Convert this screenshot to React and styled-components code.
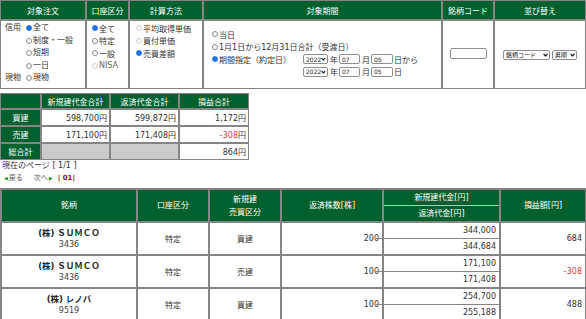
import React from 'react';
import styled, { createGlobalStyle, css } from 'styled-components';

const GREEN = '#00612e';
const LINE = '#858585';

const GlobalStyle = createGlobalStyle`
  body {
    margin: 0;
    background: #fff;
    font-family: "DejaVu Sans", "Noto Sans CJK JP", sans-serif;
    font-size: 8px;
    color: #333;
  }
`;

const Page = styled.div`
  width: 586px;
  display: flex;
  flex-direction: column;
  align-items: flex-start;
`;

/* ---- search form ---- */

const SearchTable = styled.table`
  width: 586px;
  border-collapse: separate;
  border-spacing: 0;
  table-layout: fixed;
`;

const Col = styled.col`
  width: ${(p) => p.$w}px;
`;

const HeadCell = styled.th`
  background: ${GREEN};
  color: #fff;
  font-weight: normal;
  height: 18px;
  padding: 0;
  border: 1px solid ${LINE};
  text-align: center;
  white-space: nowrap;
`;

const FormCell = styled.td`
  height: 66px;
  padding: ${(p) => (p.$top ? `1px 0 0 ${p.$pad}px` : `0 0 0 ${p.$pad || 0}px`)};
  border: 1px solid ${LINE};
  vertical-align: ${(p) => (p.$top ? 'top' : 'middle')};
  text-align: ${(p) => (p.$center ? 'center' : 'left')};
  white-space: nowrap;
`;

const OrderGrid = styled.div`
  display: grid;
  grid-template-columns: 21px auto;
  line-height: 12.5px;
`;

const Option = styled.div`
  display: flex;
  align-items: center;
  height: 12.5px;
  color: ${(p) => (p.$dim ? '#666' : '#333')};
`;

const Radio = styled.span`
  display: inline-block;
  box-sizing: border-box;
  width: 6px;
  height: 6px;
  margin-right: 1px;
  border-radius: 50%;
  border: 1px solid ${(p) => (p.$checked ? '#2b7de9' : p.$disabled ? '#d0d0d0' : '#8c8c8c')};
  background: ${(p) => (p.$checked ? '#1f6fe0' : '#fff')};
`;

const PeriodGrid = styled.div`
  display: grid;
  grid-template-columns: 91px auto;
  grid-auto-rows: 12.5px;
  align-items: center;
  padding-bottom: 3px;
`;

const Wide = styled.div`
  grid-column: 1 / span 2;
`;

const DateRow = styled.div`
  grid-column: 2;
  display: flex;
  align-items: center;
`;

const Select = styled.span`
  display: inline-flex;
  align-items: center;
  justify-content: space-between;
  box-sizing: border-box;
  width: ${(p) => p.$w}px;
  height: 10px;
  padding: 0 1px 0 2px;
  border: 1px solid #8f8f8f;
  border-radius: 2px;
  background: #fff;
  font-size: 6px;
  color: #222;
`;

const TextBox = styled.span`
  display: inline-flex;
  align-items: center;
  box-sizing: border-box;
  width: ${(p) => p.$w}px;
  height: ${(p) => p.$h || 10}px;
  padding-left: 2px;
  border: 1px solid #8f8f8f;
  border-radius: 2px;
  background: #fff;
  font-size: 6px;
  color: #222;
`;

const Unit = styled.span`
  margin: 0 1px 0 2px;
`;

const SortBox = styled.div`
  display: flex;
  justify-content: center;
  gap: 2px;
`;

const Chevron = () => (
  <svg width="5" height="4" viewBox="0 0 5 4">
    <path d="M0.6 1 L2.5 3 L4.4 1" fill="none" stroke="#111" strokeWidth="1.2" />
  </svg>
);

/* ---- totals ---- */

const SumTable = styled.table`
  margin-top: 4px;
  width: 249px;
  border-collapse: separate;
  border-spacing: 0;
  table-layout: fixed;
`;

const SumHead = styled.th`
  background: ${GREEN};
  color: #fff;
  font-weight: normal;
  height: 14px;
  padding: 0;
  border: 1px solid ${LINE};
  text-align: center;
`;

const SumCell = styled.td`
  height: 15px;
  padding: 0 2px 0 0;
  border: 1px solid ${LINE};
  text-align: right;
  background: ${(p) => (p.$blank ? '#cbcbcb' : '#fff')};
  color: ${(p) => (p.$neg ? '#e5383b' : '#333')};
`;

const Yen = styled.span`
  color: #333;
`;

/* ---- pager ---- */

const PageInfo = styled.div`
  margin-left: 2px;
  line-height: 12px;
  color: #333;
`;

const Pager = styled.div`
  display: flex;
  align-items: center;
  margin-left: 3px;
  line-height: 12px;
  font-size: 7px;
  color: #555;
`;

const Arrow = styled.span`
  color: #1f8a2a;
  font-size: 5px;
  margin: 0 1px;
`;

const PageLink = styled.span`
  margin-left: ${(p) => p.$gap || 0}px;
`;

const PageNo = styled.span`
  margin-left: 4px;
  color: #8b1a1a;
  font-weight: bold;
`;

/* ---- result list ---- */

const ListTable = styled.table`
  margin-top: 4px;
  width: 585px;
  border-collapse: collapse;
  table-layout: fixed;
`;

const ListHead = styled.th`
  background: ${GREEN};
  color: #fff;
  font-weight: normal;
  height: 15px;
  padding: 0;
  line-height: 13px;
  border: 2px solid ${LINE};
  border-top-width: ${(p) => (p.$split === 'bottom' ? 1 : 2)}px;
  border-bottom-width: ${(p) => (p.$split === 'top' ? 1 : 2)}px;
  border-top-color: ${(p) => (p.$split === 'bottom' ? '#bfbfbf' : LINE)};
  border-bottom-color: ${(p) => (p.$split === 'top' ? '#bfbfbf' : LINE)};
  text-align: center;
`;

const ListCell = styled.td`
  height: 15px;
  padding: 0 ${(p) => (p.$right ? 3 : 0)}px 0 0;
  border: 2px solid ${LINE};
  border-top-width: ${(p) => (p.$split === 'bottom' ? 1 : 2)}px;
  border-bottom-width: ${(p) => (p.$split === 'top' ? 1 : 2)}px;
  text-align: ${(p) => (p.$right ? 'right' : 'center')};
  color: ${(p) => (p.$neg ? '#e5383b' : '#333')};
  background: #fff;
  ${(p) =>
    p.$split === 'top' &&
    css`
      position: relative;
      &::after {
        content: '';
        position: absolute;
        left: -8px;
        bottom: -1px;
        width: 8px;
        height: 1px;
        background: ${LINE};
      }
    `}
`;

const Name = styled.div`
  font-weight: bold;
  font-size: 8.5px;
  color: #222;
  line-height: 12px;
`;

const Code = styled.div`
  color: #444;
  line-height: 12px;
`;

const summary = [
  { label: '買建', open: '598,700', close: '599,872', pl: '1,172' },
  { label: '売建', open: '171,100', close: '171,408', pl: '-308' },
];

const positions = [
  { name: '(株) ＳＵＭＣＯ', code: '3436', side: '買建', qty: 200, open: '344,000', close: '344,684', pl: '684' },
  { name: '(株) ＳＵＭＣＯ', code: '3436', side: '売建', qty: 100, open: '171,100', close: '171,408', pl: '-308' },
  { name: '(株) レノバ', code: '9519', side: '買建', qty: 100, open: '254,700', close: '255,188', pl: '488' },
];

const DateInputs = ({ tail }) => (
  <DateRow>
    <Select $w={25}>2022<Chevron /></Select>
    <Unit>年</Unit>
    <TextBox $w={21}>07</TextBox>
    <Unit>月</Unit>
    <TextBox $w={22}>05</TextBox>
    <Unit style={{ marginLeft: 1 }}>{tail}</Unit>
  </DateRow>
);

const App = () => {
  return (
    <Page>
      <GlobalStyle />
      <SearchTable>
        <colgroup>
          <Col $w={86} />
          <Col $w={43} />
          <Col $w={74} />
          <Col $w={239} />
          <Col $w={52} />
          <Col $w={92} />
        </colgroup>
        <thead>
          <tr>
            <HeadCell>対象注文</HeadCell>
            <HeadCell>口座区分</HeadCell>
            <HeadCell>計算方法</HeadCell>
            <HeadCell>対象期間</HeadCell>
            <HeadCell>銘柄コード</HeadCell>
            <HeadCell>並び替え</HeadCell>
          </tr>
        </thead>
        <tbody>
          <tr>
            <FormCell $top $pad={4}>
              <OrderGrid>
                <span>信用</span>
                <Option><Radio $checked />全て</Option>
                <span />
                <Option><Radio />制度・一般</Option>
                <span />
                <Option><Radio />短期</Option>
                <span />
                <Option><Radio />一日</Option>
                <span>現物</span>
                <Option><Radio />現物</Option>
              </OrderGrid>
            </FormCell>
            <FormCell $top $pad={5}>
              <Option><Radio $checked />全て</Option>
              <Option><Radio />特定</Option>
              <Option><Radio />一般</Option>
              <Option $dim><Radio $disabled />NISA</Option>
            </FormCell>
            <FormCell $top $pad={6}>
              <Option><Radio $disabled />平均取得単価</Option>
              <Option><Radio $disabled />買付単価</Option>
              <Option><Radio $checked />売買差額</Option>
            </FormCell>
            <FormCell $pad={8}>
              <PeriodGrid>
                <Wide><Option><Radio />当日</Option></Wide>
                <Wide><Option><Radio />1月1日から12月31日合計（受渡日）</Option></Wide>
                <Option><Radio $checked />期間指定（約定日）</Option>
                <DateInputs tail="日から" />
                <DateInputs tail="日" />
              </PeriodGrid>
            </FormCell>
            <FormCell $center>
              <TextBox $w={37} $h={11} />
            </FormCell>
            <FormCell $center>
              <SortBox>
                <Select $w={47}>銘柄コード<Chevron /></Select>
                <Select $w={25}>昇順<Chevron /></Select>
              </SortBox>
            </FormCell>
          </tr>
        </tbody>
      </SearchTable>

      <SumTable>
        <colgroup>
          <Col $w={41} />
          <Col $w={69} />
          <Col $w={69} />
          <Col $w={70} />
        </colgroup>
        <thead>
          <tr>
            <SumHead />
            <SumHead>新規建代金合計</SumHead>
            <SumHead>返済代金合計</SumHead>
            <SumHead>損益合計</SumHead>
          </tr>
        </thead>
        <tbody>
          {summary.map((row) => (
            <tr key={row.label}>
              <SumHead as="td">{row.label}</SumHead>
              <SumCell>{row.open}円</SumCell>
              <SumCell>{row.close}円</SumCell>
              <SumCell $neg={row.pl.startsWith('-')}>{row.pl}<Yen>円</Yen></SumCell>
            </tr>
          ))}
          <tr>
            <SumHead as="td">総合計</SumHead>
            <SumCell $blank />
            <SumCell $blank />
            <SumCell>864円</SumCell>
          </tr>
        </tbody>
      </SumTable>

      <PageInfo>現在のページ [ 1/1 ]</PageInfo>
      <Pager>
        <Arrow>◀</Arrow>
        <PageLink>戻る</PageLink>
        <PageLink $gap={11}>次へ</PageLink>
        <Arrow>▶</Arrow>
        <PageNo>| 01|</PageNo>
      </Pager>

      <ListTable>
        <colgroup>
          <Col $w={136} />
          <Col $w={72} />
          <Col $w={72} />
          <Col $w={102} />
          <Col $w={117} />
          <Col $w={86} />
        </colgroup>
        <thead>
          <tr>
            <ListHead rowSpan={2}>銘柄</ListHead>
            <ListHead rowSpan={2}>口座区分</ListHead>
            <ListHead rowSpan={2}>新規建<br />売買区分</ListHead>
            <ListHead rowSpan={2}>返済株数[株]</ListHead>
            <ListHead $split="top">新規建代金[円]</ListHead>
            <ListHead rowSpan={2}>損益額[円]</ListHead>
          </tr>
          <tr>
            <ListHead $split="bottom">返済代金[円]</ListHead>
          </tr>
        </thead>
        <tbody>
          {positions.map((p, i) => (
            <React.Fragment key={i}>
              <tr>
                <ListCell rowSpan={2}>
                  <Name>{p.name}</Name>
                  <Code>{p.code}</Code>
                </ListCell>
                <ListCell rowSpan={2}>特定</ListCell>
                <ListCell rowSpan={2}>{p.side}</ListCell>
                <ListCell rowSpan={2} $right>{p.qty}</ListCell>
                <ListCell $right $split="top">{p.open}</ListCell>
                <ListCell rowSpan={2} $right $neg={p.pl.startsWith('-')}>{p.pl}</ListCell>
              </tr>
              <tr>
                <ListCell $right $split="bottom">{p.close}</ListCell>
              </tr>
            </React.Fragment>
          ))}
        </tbody>
      </ListTable>
    </Page>
  );
};

export default App;
